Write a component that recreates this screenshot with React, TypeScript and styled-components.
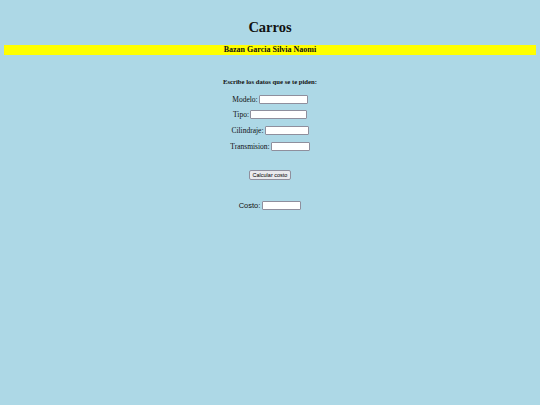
import React from 'react';
import styled, { createGlobalStyle } from 'styled-components';

const GlobalStyle = createGlobalStyle`
  html, body {
    margin: 0;
    background-color: #add8e6;
  }
  body {
    padding: 4px;
    font-family: "Liberation Serif", "Times New Roman", serif;
    color: #111;
  }
`;

const Page = styled.main`
  display: flex;
  flex-direction: column;
  align-items: center;
`;

const Title = styled.h1`
  font-size: 14.5px;
  font-weight: bold;
  margin: 14px 0 9px;
  line-height: 18px;
`;

const Banner = styled.h2`
  width: 100%;
  background-color: #ffff00;
  text-align: center;
  font-size: 8px;
  font-weight: bold;
  line-height: 10px;
  margin: 0;
`;

const Form = styled.form`
  display: flex;
  flex-direction: column;
  align-items: center;
  margin-top: 22px;
`;

const Prompt = styled.p`
  font-size: 6.7px;
  font-weight: bold;
  margin: 0 0 7px;
  line-height: 10px;
`;

const Row = styled.label`
  display: flex;
  align-items: center;
  gap: 1px;
  font-size: 7.5px;
  height: 10px;
  margin-bottom: 5.7px;
`;

const Field = styled.input<{ $w?: number }>`
  box-sizing: border-box;
  width: ${(p) => p.$w ?? 48}px;
  height: 9px;
  padding: 0;
  border: 1px solid #8f8f9d;
  border-radius: 1px;
  background: #fff;
  font-size: 6px;
`;

const Button = styled.button`
  box-sizing: border-box;
  margin-top: 13px;
  height: 10px;
  padding: 0 3px;
  font-family: "Liberation Sans", Arial, sans-serif;
  font-size: 5.5px;
  border: 1px solid #8f8f9d;
  border-radius: 2px;
  background: #e9e9ed;
  color: #000;
`;

const Result = styled.label`
  display: flex;
  align-items: center;
  gap: 2px;
  margin-top: 21px;
  font-family: "Liberation Sans", Arial, sans-serif;
  font-size: 7.5px;
`;

const fields = [
  { label: 'Modelo:', w: 49 },
  { label: 'Tipo:', w: 57 },
  { label: 'Cilindraje:', w: 44 },
  { label: 'Transmision:', w: 39 },
];

export default function App() {
  return (
    <>
      <GlobalStyle />
      <Page>
        <Title>Carros</Title>
        <Banner>Bazan Garcia Silvia Naomi</Banner>
        <Form onSubmit={(e) => e.preventDefault()}>
          <Prompt>Escribe los datos que se te piden:</Prompt>
          {fields.map((f) => (
            <Row key={f.label}>
              {f.label}
              <Field type="text" $w={f.w} />
            </Row>
          ))}
          <Button type="button">Calcular costo</Button>
          <Result>
            Costo:
            <Field type="text" $w={39} />
          </Result>
        </Form>
      </Page>
    </>
  );
}
